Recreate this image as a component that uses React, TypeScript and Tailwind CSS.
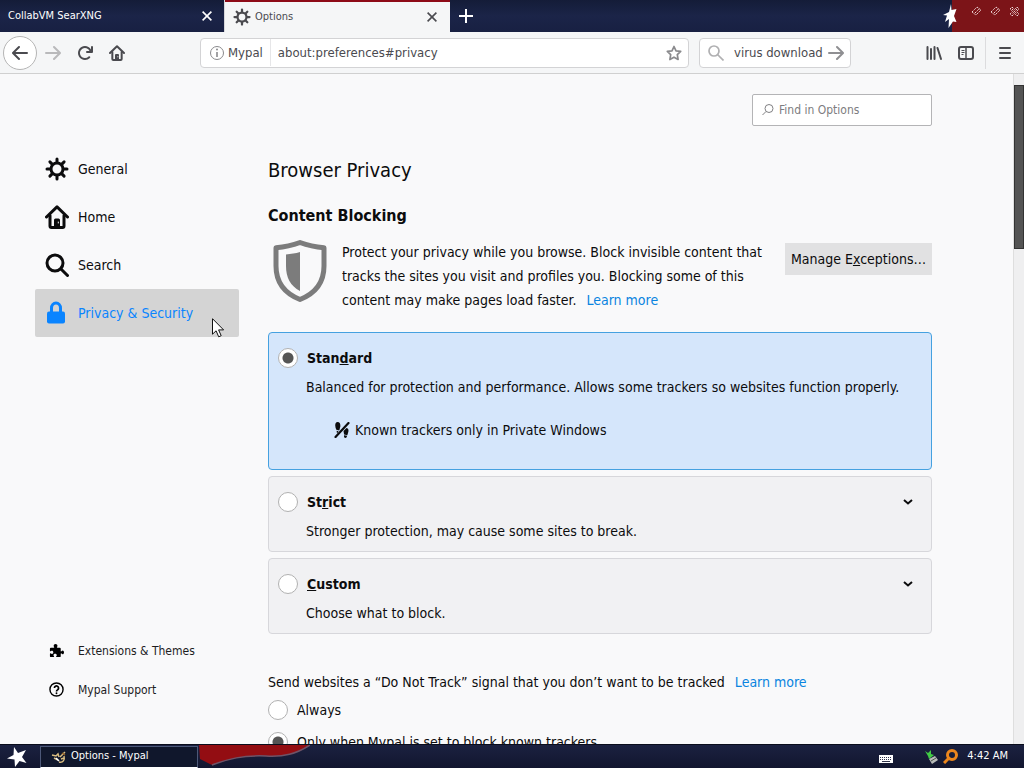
import React, { useState } from 'react';

type IconProps = { className?: string };

const GearIcon = ({ className }: IconProps) => (
    <svg viewBox="0 0 24 24" className={className} fill="none" stroke="currentColor" strokeLinecap="round" aria-hidden="true">
        <circle cx="12" cy="12" r="6" strokeWidth="3" />
        <path
            strokeWidth="3"
            d="M12 2v3M12 19v3M2 12h3M19 12h3M4.9 4.9l2 2M17.1 17.1l2 2M4.9 19.1l2-2M17.1 6.9l2-2"
        />
    </svg>
);

const HomeIcon = ({ className }: IconProps) => (
    <svg viewBox="0 0 24 24" className={className} fill="none" stroke="currentColor" strokeWidth="3" strokeLinecap="round" strokeLinejoin="round" aria-hidden="true">
        <path d="M1.500 12L12 1.800 22.500 12" />
        <path d="M5 10.500V21q0 1.500 1.500 1.500h11q1.500 0 1.500-1.500V10.500" />
        <path d="M9 22v-7q0-1.500 1.500-1.500h3q1.500 0 1.500 1.500v7z" fill="currentColor" stroke="none" />
        <path d="M13.300 17v1" stroke="#f9f9fa" strokeWidth="1" />
    </svg>
);

const SearchIcon = ({ className }: IconProps) => (
    <svg viewBox="0 0 24 24" className={className} fill="none" stroke="currentColor" strokeWidth="3" strokeLinecap="round" aria-hidden="true">
        <circle cx="10" cy="10" r="8" />
        <path d="M16 16l6.5 6.5" />
    </svg>
);

const LockIcon = ({ className }: IconProps) => (
    <svg viewBox="0 0 24 24" className={className} aria-hidden="true">
        <path d="M6.500 11V7a4.500 5 0 0 1 9 0v4" fill="none" stroke="currentColor" strokeWidth="3" />
        <rect x="2" y="10.500" width="18" height="12" rx="2" fill="currentColor" />
    </svg>
);

const PuzzleIcon = ({ className }: IconProps) => (
    <svg viewBox="0 0 16 16" className={className} fill="currentColor" aria-hidden="true">
        <path d="M14.500 8c-.970 0-1 1-1.500 1-.3 0-.5-.3-.5-.6V6a1 1 0 0 0-1-1H9c-.4 0-.6-.2-.6-.5C8.400 4 9 4 9 2.800 9 1.800 8.200 1 7 1s-2 .8-2 1.800C5 4 5.600 4 5.600 4.500c0 .3-.2.5-.6.5H2a1 1 0 0 0-1 1v2.200c0 .4.2.6.5.6.5 0 .7-.6 1.700-.6.8 0 1.400.7 1.400 1.700s-.6 1.800-1.400 1.800c-1 0-1.200-.7-1.700-.7-.3 0-.5.2-.5.6V14a1 1 0 0 0 1 1h3c.4 0 .5-.2.5-.5 0-.5-.7-.7-.7-1.500S5.500 11.500 6.500 11.500s1.800.7 1.800 1.500-.8 1-.8 1.500c0 .3.2.5.5.5h3.500a1 1 0 0 0 1-1v-2.400c0-.4.2-.6.5-.6.5 0 .7 1 1.500 1S16 11 16 10s-.6-2-1.500-2z" />
    </svg>
);

const HelpIcon = ({ className }: IconProps) => (
    <svg viewBox="0 0 16 16" className={className} fill="none" stroke="currentColor" aria-hidden="true">
        <circle cx="8" cy="8" r="7" strokeWidth="1.500" />
        <path d="M5.800 6.500a2.200 2.200 0 1 1 3.400 1.800C8.400 8.800 8 9 8 10" strokeWidth="1.800" />
        <circle cx="8" cy="12" r="1" fill="currentColor" stroke="none" />
    </svg>
);

const BackIcon = ({ className }: IconProps) => (
    <svg viewBox="0 0 16 16" className={className} fill="currentColor" aria-hidden="true">
        <path d="M15 7H3.414l4.293-4.293a1 1 0 0 0-1.414-1.414l-6 6a1 1 0 0 0 0 1.414l6 6a1 1 0 0 0 1.414-1.414L3.414 9H15a1 1 0 0 0 0-2z" />
    </svg>
);

const ForwardIcon = ({ className }: IconProps) => (
    <svg viewBox="0 0 16 16" className={className} fill="currentColor" aria-hidden="true">
        <path d="M15.707 7.293l-6-6a1 1 0 0 0-1.414 1.414L12.586 7H1a1 1 0 0 0 0 2h11.586l-4.293 4.293a1 1 0 1 0 1.414 1.414l6-6a1 1 0 0 0 0-1.414z" />
    </svg>
);

const ReloadIcon = ({ className }: IconProps) => (
    <svg viewBox="0 0 16 16" className={className} fill="currentColor" aria-hidden="true">
        <path d="M15 1a1 1 0 0 0-1 1v2.418A6.995 6.995 0 1 0 8 15a6.954 6.954 0 0 0 4.950-2.050 1 1 0 0 0-1.414-1.414A5.019 5.019 0 1 1 12.549 6H10a1 1 0 0 0 0 2h5a1 1 0 0 0 1-1V2a1 1 0 0 0-1-1z" />
    </svg>
);

const InfoIcon = ({ className }: IconProps) => (
    <svg viewBox="0 0 16 16" className={className} fill="none" stroke="currentColor" aria-hidden="true">
        <circle cx="8" cy="8" r="6.500" />
        <path d="M8 7v5" strokeWidth="1.600" />
        <circle cx="8" cy="4.500" r="1" fill="currentColor" stroke="none" />
    </svg>
);

const StarIcon = ({ className }: IconProps) => (
    <svg viewBox="0 0 16 16" className={className} fill="none" stroke="currentColor" strokeWidth="1.700" strokeLinejoin="round" aria-hidden="true">
        <path d="M8 1.500l2 4.300 4.700.6-3.400 3.300.8 4.800L8 12.200l-4.100 2.300.8-4.800L1.300 6.400 6 5.800z" />
    </svg>
);

const LibraryIcon = ({ className }: IconProps) => (
    <svg viewBox="0 0 16 16" className={className} fill="none" stroke="currentColor" strokeWidth="2" strokeLinecap="round" aria-hidden="true">
        <path d="M1.500 2v12M5 4v10M8.500 2v12M11.500 3l3.500 11" />
    </svg>
);

const SidebarIcon = ({ className }: IconProps) => (
    <svg viewBox="0 0 16 16" className={className} fill="none" stroke="currentColor" aria-hidden="true">
        <rect x="1" y="2" width="14" height="12" rx="2" strokeWidth="2" />
        <path d="M8 2v12" strokeWidth="1.500" />
        <path d="M3.500 5.500h3M3.500 7.500h3M3.500 9.500h2" />
    </svg>
);

const CloseIcon = ({ className }: IconProps) => (
    <svg viewBox="0 0 10 10" className={className} fill="none" stroke="currentColor" strokeWidth="1.600" aria-hidden="true">
        <path d="M.6.6l8.800 8.800M9.400.6L.6 9.400" />
    </svg>
);

const ShieldIcon = ({ className }: IconProps) => (
    <svg viewBox="0 0 54 62" className={className} aria-hidden="true">
        <path
            d="M27 2.500c8 3 15 4.500 24 5.200V26c0 17-9 27.500-24 33.500C12 53.500 3 43 3 26V7.700c9-.7 16-2.200 24-5.200z"
            fill="none"
            stroke="#7c7c7c"
            strokeWidth="5"
            strokeLinejoin="round"
        />
        <path d="M27 12v39C17.500 46 13 37.500 13 26V14.500c5-.4 9.500-1.200 14-2.500z" fill="#7c7c7c" />
    </svg>
);

const TrackerIcon = ({ className }: IconProps) => (
    <svg viewBox="0 0 16 16" className={className} fill="currentColor" aria-hidden="true">
        <path d="M3.500 0C5.800 0 6.600 2 6.300 4.500L5.300 8.500 2.300 7.800C1 4.500.4.500 3.500 0z" />
        <path d="M2.600 8.800l2 .4-1.600 2.300z" />
        <path d="M12.500 6c2.400.4 2.300 3 1.500 5l-.7 2.200-3.200-.6L9.500 9z" />
        <path d="M10 13.300l3 .4c0 2.600-2.800 3-3 .8z" />
        <path d="M1.500 15L14.500 1" stroke="currentColor" strokeWidth="2.200" strokeLinecap="round" />
    </svg>
);

const ChevronIcon = ({ className }: IconProps) => (
    <svg viewBox="0 0 10 6" className={className} fill="none" stroke="currentColor" strokeWidth="2" aria-hidden="true">
        <path d="M1 1l4 3.500L9 1" />
    </svg>
);

const WindowButtons = () => (
    <div className="flex h-[22px] items-center gap-2 pr-1 text-[#f0dada]">
        <button aria-label="Minimize">
            <svg viewBox="0 0 11 11" className="size-[11px]" fill="none" stroke="currentColor" strokeDasharray="1.500 .8">
                <path d="M1 6l5-5 4 3-5 5zM4 7l4-4" />
            </svg>
        </button>
        <button aria-label="Maximize">
            <svg viewBox="0 0 11 11" className="size-[11px]" fill="none" stroke="currentColor" strokeDasharray="1.500 .8">
                <path d="M1 6l5-5 4 3-5 5zM4 7l4-4" />
            </svg>
        </button>
        <button aria-label="Close">
            <svg viewBox="0 0 11 11" className="size-[11px]" fill="none" stroke="currentColor" strokeDasharray="1.500 .8">
                <path d="M3 1l2.500 2.500L8 1l2 2-2.500 2.500L10 8l-2 2-2.500-2.500L3 10 1 8l2.500-2.500L1 3zM3 3l5 5M8 3L3 8" />
            </svg>
        </button>
    </div>
);

const categories = [
    { id: 'general', name: 'General', icon: GearIcon },
    { id: 'home', name: 'Home', icon: HomeIcon },
    { id: 'search', name: 'Search', icon: SearchIcon },
    { id: 'privacy', name: 'Privacy & Security', icon: LockIcon },
];

const radioClass =
    'size-5 shrink-0 appearance-none rounded-full border border-[#b1b1b1] bg-white checked:bg-[radial-gradient(circle,#555_0,#555_5px,#fff_6px)]';

function TabStrip() {
    return (
        <header className="flex h-8 shrink-0 bg-linear-to-b from-[#141c38] via-[#1b2448] to-[#182042] text-[11px] text-white">
            <div className="flex w-[225px] items-center justify-between border-r border-[#d7d7db] pr-3 pl-2">
                <span>CollabVM SearXNG</span>
                <button aria-label="Close tab">
                    <CloseIcon className="size-[10px]" />
                </button>
            </div>
            <div className="flex w-[225px] items-center border-t-2 border-[#8e0b18] bg-[#f5f6f7] pr-[13px] pl-2 text-[#4a4a4f]">
                <GearIcon className="size-[18px]" />
                <span className="ml-1 flex-1">Options</span>
                <button aria-label="Close tab">
                    <CloseIcon className="size-[10px]" />
                </button>
            </div>
            <button aria-label="New tab" className="px-[9px]">
                <svg viewBox="0 0 14 14" className="size-[14px]" stroke="currentColor" strokeWidth="2">
                    <path d="M7 0v14M0 7h14" />
                </svg>
            </button>
            <div className="flex-1" />
            <div className="flex bg-linear-to-r from-transparent from-[9px] to-[#7c1418] to-[9px]">
                <svg viewBox="0 0 14 24" className="mt-1 h-6 w-[14px]" fill="#fff">
                    <path d="M8 0l.5 6 5-1-2.500 7 2.500 6-3.500-.5L5.500 24 6 15 2 18l2-6.500L0 11l6-3z" />
                </svg>
                <div className="w-[14px]" />
                <WindowButtons />
            </div>
        </header>
    );
}

function Toolbar() {
    return (
        <div className="flex h-[42px] shrink-0 items-center border-b border-[#d0d0d0] bg-[#f5f6f7] pl-[3px] text-[13px] text-[#4a4a4f]">
            <button aria-label="Back" className="flex size-[34px] items-center justify-center rounded-full border border-[#b5b5b5] bg-white">
                <BackIcon className="size-4" />
            </button>
            <button aria-label="Forward" className="ml-2 text-[#b9b9bb]" disabled>
                <ForwardIcon className="size-4" />
            </button>
            <button aria-label="Reload" className="ml-4">
                <ReloadIcon className="size-4" />
            </button>
            <button aria-label="Home" className="ml-4">
                <HomeIcon className="size-4" />
            </button>
            <div className="ml-[75px] flex h-[30px] flex-1 items-center rounded-sm border border-[#d3d3d5] bg-white pr-[6px] pl-2">
                <InfoIcon className="size-4 text-[#8a8a8d]" />
                <span className="ml-[3px] border-r border-[#e6e6e8] py-1 pr-[7px]">Mypal</span>
                <input aria-label="Address" className="ml-[7px] min-w-0 flex-1 outline-none" defaultValue="about:preferences#privacy" />
                <button aria-label="Bookmark this page" className="text-[#8a8a8d]">
                    <StarIcon className="size-4" />
                </button>
            </div>
            <div className="ml-[10px] flex h-[30px] w-[152px] items-center rounded-sm border border-[#d3d3d5] bg-white px-2 text-[#8f8f92]">
                <svg viewBox="0 0 16 16" className="size-4 shrink-0" fill="none" stroke="#b0b0b2" strokeWidth="1.700">
                    <circle cx="6" cy="6" r="5" />
                    <path d="M9.500 9.500l6 6" />
                </svg>
                <input aria-label="Search the web" className="ml-[10px] w-[91px] text-[#4a4a4f] outline-none" defaultValue="virus download" />
                <button aria-label="Search" className="ml-[3px]">
                    <ForwardIcon className="size-4" />
                </button>
            </div>
            <button aria-label="Library" className="ml-[75px]">
                <LibraryIcon className="size-4" />
            </button>
            <button aria-label="Sidebars" className="mr-[11px] ml-4">
                <SidebarIcon className="size-4" />
            </button>
            <button aria-label="Open menu" className="border-l border-[#dcdcde] px-3 py-2">
                <svg viewBox="0 0 14 16" className="h-4 w-[14px]" stroke="currentColor" strokeWidth="2" strokeLinecap="round">
                    <path d="M2 3h10M2 8h10M2 13h10" />
                </svg>
            </button>
        </div>
    );
}

function Sidebar() {
    return (
        <aside className="flex w-[239px] shrink-0 flex-col justify-between pt-[71px] pb-[35px] pl-[35px]">
            <nav>
                {categories.map((category) => {
                    const Icon = category.icon;
                    const isActive = category.id === 'privacy';
                    return (
                        <a
                            key={category.id}
                            href={`#${category.id}`}
                            className={`relative flex h-12 items-center rounded-xs pl-[10px] text-[14px] ${
                                isActive ? 'bg-[#d4d4d4] text-[#0a84ff]' : 'text-[#0c0c0d]'
                            }`}
                        >
                            <Icon className="mr-[9px] size-6" />
                            {category.name}
                            {/* mouse pointer */}
                            {isActive && (
                                <svg viewBox="0 0 12 20" className="absolute top-[29px] right-[15px] h-5 w-3" aria-hidden="true">
                                    <path d="M.5.700v15.500l3.600-3.400 2.600 6 2.500-1.100-2.600-5.800h5z" fill="#fff" stroke="#111" />
                                </svg>
                            )}
                        </a>
                    );
                })}
            </nav>
            <div className="text-[12px] text-[#1d1d1f]">
                <a href="#extensions" className="flex h-[39px] items-center gap-[14px] pl-[14px]">
                    <PuzzleIcon className="size-[15px] text-black" />
                    Extensions &amp; Themes
                </a>
                <a href="#support" className="flex h-[39px] items-center gap-[14px] pl-[14px]">
                    <HelpIcon className="size-[15px] text-black" />
                    Mypal Support
                </a>
            </div>
        </aside>
    );
}

type BlockingOptionProps = {
    id: string;
    title: React.ReactNode;
    description: string;
    selected: string;
    onSelect: (id: string) => void;
    children?: React.ReactNode;
};

function BlockingOption({ id, title, description, selected, onSelect, children }: BlockingOptionProps) {
    const isSelected = selected === id;
    return (
        <div
            className={`rounded border px-[9px] pt-[13px] pb-2 leading-6 ${
                isSelected ? 'border-[#45a1e0] bg-[#d5e6fb]' : 'border-[#d7d7db] bg-[#f1f1f3]'
            }`}
        >
            <div className="flex items-center">
                <input
                    type="radio"
                    id={id}
                    name="contentBlocking"
                    className={radioClass}
                    checked={isSelected}
                    onChange={() => onSelect(id)}
                />
                <label htmlFor={id} className="ml-[9px] flex-1 font-bold">
                    {title}
                </label>
                {!isSelected && (
                    <button aria-label="Show details" className="mr-[9px]">
                        <ChevronIcon className="h-[6px] w-[10px]" />
                    </button>
                )}
            </div>
            <p className="mt-[5px] pl-7">{description}</p>
            {children}
        </div>
    );
}

function PrivacyPane() {
    const [blocking, setBlocking] = useState('standard');
    const [tracking, setTracking] = useState('only');

    return (
        <main className="ml-[29px] max-w-[664px] flex-1 pt-5 text-[14px] text-[#0c0c0d]">
            <div className="ml-auto flex h-8 w-[180px] items-center rounded-xs border border-[#b4b4b6] bg-white px-[9px]">
                <svg viewBox="0 0 12 12" className="size-3 shrink-0" fill="none" stroke="#808083">
                    <circle cx="7" cy="4.500" r="4" />
                    <path d="M4 7.500L.5 11" />
                </svg>
                <input
                    aria-label="Find in Options"
                    placeholder="Find in Options"
                    className="ml-[5px] w-full min-w-0 text-[12px] outline-none placeholder:text-[#7d7d80]"
                />
            </div>

            <h1 className="mt-[29px] text-[20px] leading-[30px]">Browser Privacy</h1>
            <h2 className="mt-[19px] text-[16px] leading-6 font-bold">Content Blocking</h2>

            <div className="mt-3 flex items-start">
                <ShieldIcon className="ml-[5px] h-[62px] w-[54px] shrink-0" />
                <p className="ml-[15px] w-[424px] leading-6">
                    Protect your privacy while you browse. Block invisible content that tracks the sites you visit and profiles
                    you. Blocking some of this content may make pages load faster.
                    <a href="#content-blocking" className="ml-[10px] text-[#0a84e0]">
                        Learn more
                    </a>
                </p>
                <button className="mt-[3px] ml-auto h-8 w-[147px] bg-[#e1e1e2] whitespace-nowrap">
                    Manage E<u>x</u>ceptions…
                </button>
            </div>

            <div className="mt-5 flex flex-col gap-[6px]">
                <BlockingOption
                    id="standard"
                    title={<>Stan<u>d</u>ard</>}
                    description="Balanced for protection and performance. Allows some trackers so websites function properly."
                    selected={blocking}
                    onSelect={setBlocking}
                >
                    <div className="mt-[19px] mb-[19px] flex items-center gap-[5px] pl-14">
                        <TrackerIcon className="size-4" />
                        Known trackers only in Private Windows
                    </div>
                </BlockingOption>
                <BlockingOption
                    id="strict"
                    title={<>St<u>r</u>ict</>}
                    description="Stronger protection, may cause some sites to break."
                    selected={blocking}
                    onSelect={setBlocking}
                />
                <BlockingOption
                    id="custom"
                    title={<><u>C</u>ustom</>}
                    description="Choose what to block."
                    selected={blocking}
                    onSelect={setBlocking}
                />
            </div>

            <p className="mt-9 leading-6">
                Send websites a “Do Not Track” signal that you don’t want to be tracked
                <a href="#do-not-track" className="ml-[10px] text-[#0a84e0]">
                    Learn more
                </a>
            </p>
            <label className="flex h-8 items-center gap-[9px]">
                <input
                    type="radio"
                    name="doNotTrack"
                    className={radioClass}
                    checked={tracking === 'always'}
                    onChange={() => setTracking('always')}
                />
                Always
            </label>
            <label className="flex h-8 items-center gap-[9px]">
                <input
                    type="radio"
                    name="doNotTrack"
                    className={radioClass}
                    checked={tracking === 'only'}
                    onChange={() => setTracking('only')}
                />
                Only when Mypal is set to block known trackers
            </label>
        </main>
    );
}

function Taskbar() {
    return (
        <footer className="flex h-6 shrink-0 items-center border-t border-[#0a0d1c] bg-linear-to-b from-[#1b2140] to-[#12162f] text-[11px] text-white">
            <button aria-label="Start" className="ml-[7px]">
                <svg viewBox="0 0 20 20" className="size-5" fill="#fff">
                    <path d="M7 0l4 6 8-3-4 7 4.500 6-7-2L8 20l-.5-7.500L0 11.500 6.500 8z" />
                </svg>
            </button>
            <button className="ml-[13px] flex h-[22px] w-[158px] items-center gap-1 border border-[#4c5878] border-b-white bg-[#10172c] pl-[10px]">
                <svg viewBox="0 0 16 14" className="h-[14px] w-4" fill="none" stroke="#d9bd80" strokeWidth="1.500">
                    <path d="M1 5l4 1 2-2 1 3M3 8l4 2M8 12c4 1 6-2 5-6M9 7l5-5M10 9l3-1" />
                    <path d="M5 8l3 3" stroke="#fff" />
                    <path d="M11 3l3 2" stroke="#8d5a22" />
                </svg>
                Options - Mypal
            </button>
            <svg viewBox="0 0 112 23" className="h-[23px] w-28" aria-hidden="true">
                <path d="M1 0h111C98 9 86 12 68 11 45 10 30 14 14 20L2 14z" fill="#930d12" />
                <path d="M112 0C98 9 86 12 68 11 45 10 30 14 14 20" fill="none" stroke="#6f5367" strokeWidth="1.500" />
            </svg>
            <div className="flex-1" />
            <svg viewBox="0 0 14 8" className="mt-1 mr-8 h-2 w-[14px]" aria-hidden="true">
                <path d="M0 0h14v8H0z" fill="#fff" />
                <path d="M1 2.500h12M1 4.500h12" stroke="#30344c" strokeDasharray="1 1" />
                <path d="M3 6.500h8" stroke="#30344c" />
            </svg>
            <svg viewBox="0 0 13 14" className="mr-[5px] h-[14px] w-[13px]" aria-hidden="true">
                <path d="M4 9l6-3 3 4-6 4z" fill="#b9bcb9" />
                <path d="M6 11l5-3" stroke="#4d554e" />
                <path d="M0 1l3 2 3-3v4l3 1-5 4-1-3z" fill="#41cc45" />
            </svg>
            <svg viewBox="0 0 15 15" className="mr-[9px] size-[15px]" fill="none" stroke="#ec871d" aria-hidden="true">
                <circle cx="9" cy="6" r="4.500" strokeWidth="3" />
                <path d="M5.500 9.500L1 14" strokeWidth="3" />
            </svg>
            <time className="mr-4">4:42 AM</time>
        </footer>
    );
}

export default function App() {
    return (
        <div className="flex h-screen flex-col overflow-hidden bg-[#f9f9fa] font-['DejaVu_Sans_Condensed','Noto_Sans',sans-serif]">
            <TabStrip />
            <Toolbar />
            <div className="flex min-h-0 flex-1">
                <Sidebar />
                <PrivacyPane />
                {/* Scrollbar */}
                <div className="ml-auto w-[11px] shrink-0 border-l border-[#dedede] bg-[#efeff0] pt-[11px]">
                    <div className="h-[164px] border border-[#333] bg-[#545454]" />
                </div>
            </div>
            <Taskbar />
        </div>
    );
}
